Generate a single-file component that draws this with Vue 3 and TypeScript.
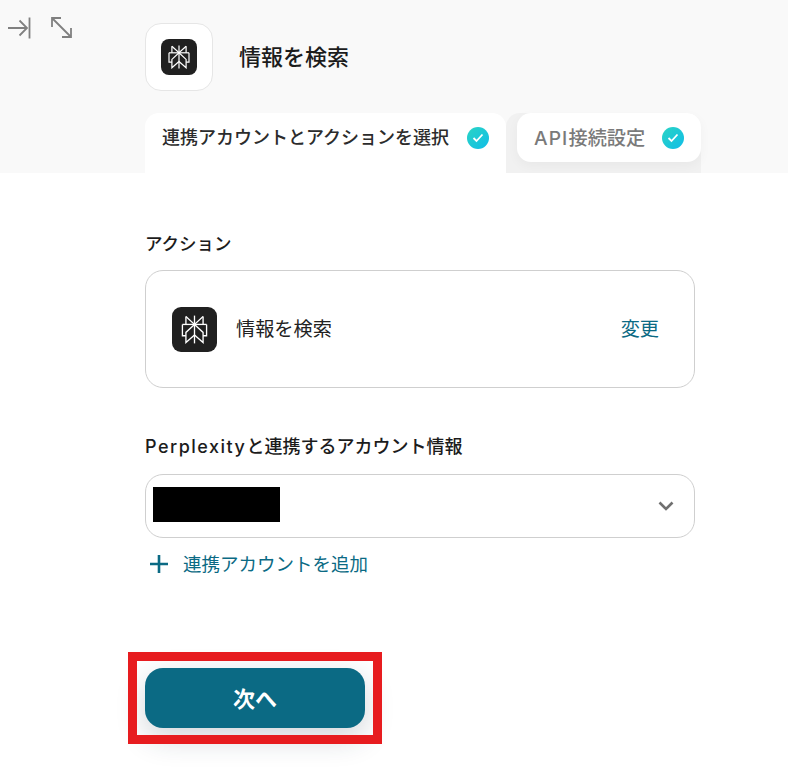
<script setup lang="ts">
const logoLines = [
  'M12 0.5V23.5',
  'M4.9 1.2L12 7.8L19.1 1.2',
  'M4.9 1.2V7.8M19.1 1.2V7.8',
  'M2 7.8H22',
  'M2 7.8V17.2H4.9M22 7.8V17.2H19.1',
  'M12 7.8L4.9 14.4V22.8L12 16.5',
  'M12 7.8L19.1 14.4V22.8L12 16.5',
]
</script>

<template>
  <div class="page">
    <header class="head">
      <div class="tools">
        <svg width="24" height="24" viewBox="0 0 24 24" fill="none" stroke="#808080" stroke-width="1.8">
          <path d="M1 12H20M12.5 4.5L20 12L12.5 19.5M22.5 1.5V22.5" />
        </svg>
        <svg width="26" height="24" viewBox="0 0 26 24" fill="none" stroke="#808080" stroke-width="1.8">
          <path d="M4 2L23 21M4 11V2H13M23 12V21H14" />
        </svg>
      </div>
      <div class="head-main">
        <div class="title-row">
          <div class="logo-box">
            <span class="logo logo-sm">
              <svg viewBox="0 0 24 24" fill="none" stroke="#fff" stroke-width="1.2">
                <path v-for="d in logoLines" :key="d" :d="d" />
              </svg>
            </span>
          </div>
          <h1>情報を検索</h1>
        </div>
        <div class="tabs">
          <div class="tab active">
            <span>連携アカウントとアクションを選択</span>
            <span class="check">
              <svg width="12" height="10" viewBox="0 0 12 10" fill="none" stroke="#fff" stroke-width="1.8">
                <path d="M1.5 5L4.5 8L10.5 1.5" />
              </svg>
            </span>
          </div>
          <div class="tab-slot">
            <div class="tab">
              <span><span class="latin">API</span>接続設定</span>
              <span class="check">
                <svg width="12" height="10" viewBox="0 0 12 10" fill="none" stroke="#fff" stroke-width="1.8">
                  <path d="M1.5 5L4.5 8L10.5 1.5" />
                </svg>
              </span>
            </div>
          </div>
        </div>
      </div>
    </header>

    <main class="body">
      <h2 class="label short">アクション</h2>
      <section class="action-card">
        <span class="logo logo-lg">
          <svg viewBox="0 0 24 24" fill="none" stroke="#fff" stroke-width="1.1">
            <path v-for="d in logoLines" :key="d" :d="d" />
          </svg>
        </span>
        <span class="action-name">情報を検索</span>
        <a class="change">変更</a>
      </section>

      <h2 class="label account-label"><span class="latin wide">Perplexity</span>と連携するアカウント情報</h2>
      <div class="select">
        <span class="redact"></span>
        <svg width="16" height="10" viewBox="0 0 16 10" fill="none" stroke="#707070" stroke-width="2.6">
          <path d="M1.5 1.5L8 8L14.5 1.5" />
        </svg>
      </div>
      <a class="add">
        <svg width="20" height="20" viewBox="0 0 20 20" fill="none" stroke="#0b6a84" stroke-width="2.6">
          <path d="M1 10H19M10 1V19" />
        </svg>
        <span>連携アカウントを追加</span>
      </a>

      <div class="next-wrap">
        <button class="next" type="button">次へ</button>
        <span class="highlight"></span>
      </div>
    </main>
  </div>
</template>

<style>
body {
  background: #fff;
}
</style>

<style scoped>
.page {
  width: 788px;
  height: 769px;
  overflow: hidden;
  font-family: Inter, "Noto Sans CJK JP", "Noto Sans", sans-serif;
  color: #222;
}

.latin {
  letter-spacing: 1.1px;
}

.latin.wide {
  letter-spacing: 1.5px;
}

.head {
  display: flex;
  height: 173px;
  background: #f9f9f9;
}

.tools {
  display: flex;
  gap: 17px;
  width: 145px;
  padding: 16px 0 0 7px;
  box-sizing: border-box;
  align-items: flex-start;
}

.head-main {
  width: 556px;
  padding-top: 23px;
}

.title-row {
  display: flex;
  align-items: center;
  gap: 26px;
}

.logo-box {
  width: 68px;
  height: 68px;
  box-sizing: border-box;
  border: 1px solid #e6e6e6;
  border-radius: 16px;
  background: #fff;
  display: flex;
  align-items: center;
  justify-content: center;
}

h1 {
  margin: 0;
  font-size: 22px;
  font-weight: 500;
  line-height: 30px;
  color: #1c1c1c;
}

.logo {
  display: flex;
  align-items: center;
  justify-content: center;
  background: #202020;
}

.logo-sm {
  width: 36px;
  height: 36px;
  border-radius: 8px;
}

.logo-sm svg {
  width: 24px;
  height: 24px;
}

.logo-lg {
  width: 45px;
  height: 45px;
  border-radius: 9px;
  flex: none;
}

.logo-lg svg {
  width: 29px;
  height: 29px;
}

.tabs {
  display: flex;
  margin-top: 22px;
  height: 60px;
}

.tab {
  display: flex;
  align-items: center;
  justify-content: space-between;
  box-sizing: border-box;
  height: 49px;
  padding: 0 17px;
  border-radius: 14px;
  background: #fff;
  font-size: 19.2px;
  font-weight: 500;
  line-height: 24px;
  color: #7a7a7a;
  box-shadow: 0 4px 12px rgba(0, 0, 0, 0.04);
}

.tab.active {
  width: 361px;
  height: 60px;
  padding: 0 17px 11px;
  border-radius: 14px 14px 0 0;
  font-size: 18px;
  color: #2c2c2c;
  box-shadow: none;
  position: relative;
  z-index: 1;
}

.tab-slot {
  width: 195px;
  padding-left: 11px;
  box-sizing: border-box;
  background: #f1f1f1;
  border-radius: 14px 14px 0 0;
}

.check {
  width: 22px;
  height: 22px;
  border-radius: 50%;
  background: linear-gradient(135deg, #2ad4c4, #10bde8);
  display: flex;
  align-items: center;
  justify-content: center;
}

.body {
  width: 550px;
  margin-left: 145px;
  padding-top: 59px;
}

.label {
  margin: 0;
  font-size: 18px;
  font-weight: 500;
  line-height: 24px;
  color: #1c1c1c;
}

.label.short {
  font-size: 17.5px;
}

.action-card {
  display: flex;
  align-items: center;
  box-sizing: border-box;
  height: 118px;
  margin-top: 14px;
  padding: 0 35px 0 26px;
  border: 1px solid #cfcfcf;
  border-radius: 18px;
}

.action-name {
  margin-left: 19px;
  font-size: 19.2px;
  line-height: 24px;
  color: #222;
}

.change {
  margin-left: auto;
  font-size: 19.2px;
  line-height: 24px;
  color: #0b6a84;
}

.account-label {
  margin-top: 47px;
}

.select {
  display: flex;
  align-items: center;
  justify-content: space-between;
  box-sizing: border-box;
  height: 64px;
  margin-top: 15px;
  padding: 0 20px 0 7px;
  border: 1px solid #cfcfcf;
  border-radius: 18px;
}

.redact {
  width: 127px;
  height: 35px;
  margin-bottom: 4px;
  background: #000;
}

.add {
  display: flex;
  align-items: center;
  gap: 14px;
  margin-top: 14px;
  padding-left: 4px;
  font-size: 18.5px;
  line-height: 24px;
  color: #0b6a84;
}

.next-wrap {
  position: relative;
  width: 220px;
  margin-top: 92px;
}

.next {
  display: block;
  width: 220px;
  height: 60px;
  padding: 0 0 3px;
  border: 0;
  border-radius: 18px;
  background: #0b6a84;
  color: #fff;
  font-family: inherit;
  font-size: 22px;
  font-weight: 700;
  box-shadow: 0 10px 30px rgba(30, 50, 70, 0.2);
}

.highlight {
  position: absolute;
  top: -16px;
  left: -17px;
  right: -17px;
  bottom: -16px;
  border: 9px solid #e71c1f;
  pointer-events: none;
}
</style>
